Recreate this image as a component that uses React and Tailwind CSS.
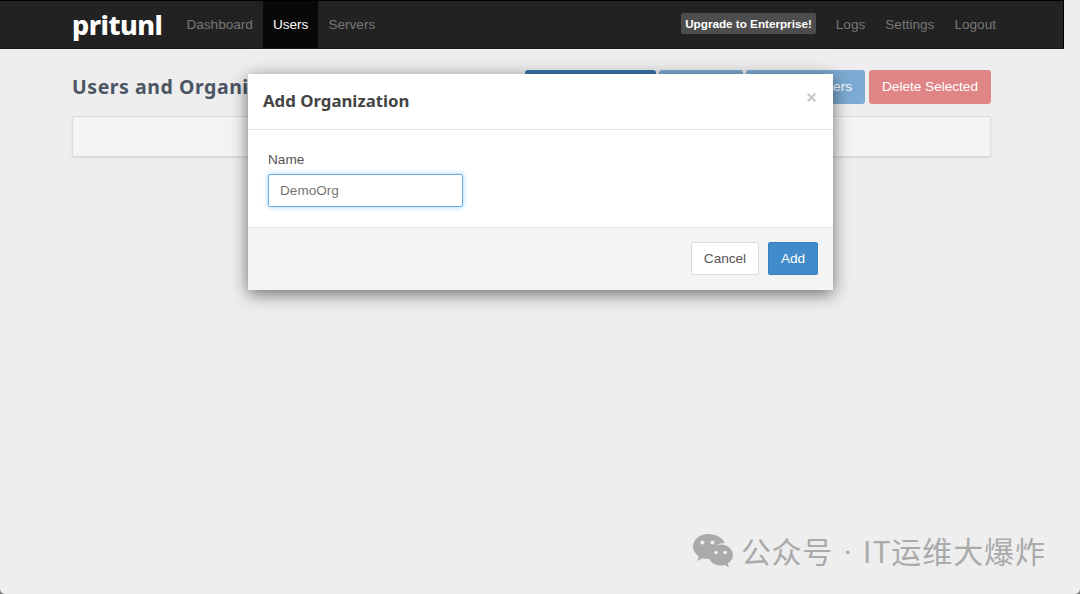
import { X } from 'lucide-react'

const SANS = 'font-["Liberation_Sans",Arial,sans-serif]'
const HEAD = 'font-["Noto_Sans","Open_Sans",sans-serif]'

function NavLink({ label, active }) {
  return (
    <a className={`flex h-full items-center px-[10px] pt-[2px] text-[13.6px] ${active ? 'bg-[#080808] text-white' : 'text-[#777]'}`}>
      {label}
    </a>
  )
}

function PageButton({ className, children }) {
  return (
    <button className={`h-[34px] rounded-[3px] pt-[1px] text-center text-[13.6px] text-white ${className}`}>{children}</button>
  )
}

function WeChatIcon() {
  return (
    <svg width="42" height="36" viewBox="0 0 42 36" className="block">
      <path fill="#aaa" d="M16 1C7.7 1 1 6.600 1 13.500c0 4 2.200 7.500 5.700 9.800L5.500 28l5-2.800c1.600.5 3.300.8 5.100.8 1 0 1.900-.1 2.800-.2-.4-1.200-.6-2.400-.6-3.600 0-6.700 6.200-12 13.900-12h.9C31 5 24.100 1 16 1z" />
      <path fill="#aaa" d="M41 22c0-5.800-5.500-10.500-12.300-10.500S16.400 16.200 16.400 22s5.500 10.500 12.300 10.500c1.400 0 2.800-.2 4-.6l4.200 2.600-1-4.100c3-1.900 5.100-4.900 5.100-8.400z" />
      <circle cx="10.500" cy="9.500" r="2.100" fill="#eee" />
      <circle cx="20.500" cy="9.500" r="2.100" fill="#eee" />
      <circle cx="24.200" cy="19.500" r="1.800" fill="#eee" />
      <circle cx="33.200" cy="19.500" r="1.800" fill="#eee" />
    </svg>
  )
}

export default function App() {
  return (
    <div className="h-[594px] w-[1080px] overflow-hidden bg-[#777777]">
      <div className={`relative h-full overflow-hidden rounded-b-[5px] bg-[#eeeeee] ${SANS}`}>
        <nav className="flex h-[49px] w-[1064px] items-stretch border-t border-b border-r border-t-black border-b-[#1a1a1a] border-r-black bg-[#222222] pl-[72px] pr-[57px]">
          <span className={`mr-[14px] flex items-center text-[27px] leading-none font-extrabold tracking-[-0.5px] text-white ${HEAD}`}>pritunl</span>
          <NavLink label="Dashboard" />
          <NavLink label="Users" active />
          <NavLink label="Servers" />
          <div className="ml-auto flex items-center">
            <span className="mr-[10px] mb-[2px] rounded-[2px] bg-[#4d4d4d] px-[4px] py-[3px] text-[11.7px] leading-[15px] font-bold text-white">Upgrade to Enterprise!</span>
            <NavLink label="Logs" />
            <NavLink label="Settings" />
            <NavLink label="Logout" />
          </div>
        </nav>

        <main className="pt-[21px] pr-[89px] pl-[72px]">
          <div className="flex h-[34px] items-center">
            <h2 className={`mb-[1px] text-[19.5px] font-bold tracking-[0.55px] text-[#4b5563] ${HEAD}`}>Users and Organizations</h2>
            <div className="ml-auto flex gap-[3px]">
              <PageButton className="w-[131px] bg-[#3a76ab]">Add Organization</PageButton>
              <PageButton className="w-[84px] bg-[#7dabd3]">Add User</PageButton>
              <PageButton className="mr-[1px] w-[119px] bg-[#7dabd3]">Bulk Add Users</PageButton>
              <PageButton className="w-[122px] bg-[#e08585]">Delete Selected</PageButton>
            </div>
          </div>
          <div className="mt-[12px] h-[41px] rounded-[2px] border border-[#dcdcdc] bg-[#f4f4f4] shadow-[0_1px_2px_rgba(0,0,0,0.1)]" />
        </main>

        <div className="absolute top-[74px] left-[248px] w-[585px] bg-white shadow-[0_4px_16px_rgba(0,0,0,0.55)]">
          <div className="flex h-[56px] items-center justify-between border-b border-[#e5e5e5] px-[15px]">
            <h3 className={`mb-[2px] text-[16.8px] font-bold text-[#444] ${HEAD}`}>Add Organization</h3>
            <X size={13} strokeWidth={3.5} className="mb-[8px] text-[#c4c4c4]" />
          </div>
          <div className="h-[97px] px-[20px] pt-[21px]">
            <label className="block text-[13.6px] leading-[17px] text-[#555]">Name</label>
            <input
              readOnly
              value="DemoOrg"
              className="mt-[6px] block h-[33px] w-[195px] rounded-[2px] border border-[#66afe9] bg-white px-[11px] text-[13.6px] text-[#777] shadow-[0_0_5px_rgba(102,175,233,0.6)] outline-none"
            />
          </div>
          <div className="flex h-[63px] items-center justify-end gap-[9px] border-t border-[#e9e9e9] bg-[#f4f4f4] pr-[15px] pb-[2px]">
            <button className="h-[33px] w-[68px] rounded-[2px] border border-[#dcdcdc] bg-white pt-[2px] text-[13.6px] text-[#555]">Cancel</button>
            <button className="h-[33px] w-[50px] rounded-[2px] border border-[#3d80bf] bg-[#428bca] pt-[2px] text-[13.6px] text-white">Add</button>
          </div>
        </div>

        <div className='absolute top-[531px] left-[692px] flex items-center text-[30px] leading-[38px] whitespace-nowrap text-[#aaaaaa] font-["Noto_Sans_CJK_SC","Noto_Sans",sans-serif]'>
          <WeChatIcon />
          <span className="mb-[2px] ml-[7px] tracking-[0.6px]">公众号</span>
          <span className='mx-[10px] mb-[2px] font-["Liberation_Sans",sans-serif]'>·</span>
          <span className="mb-[2px] tracking-[0.9px]">IT运维大爆炸</span>
        </div>
      </div>
    </div>
  )
}
